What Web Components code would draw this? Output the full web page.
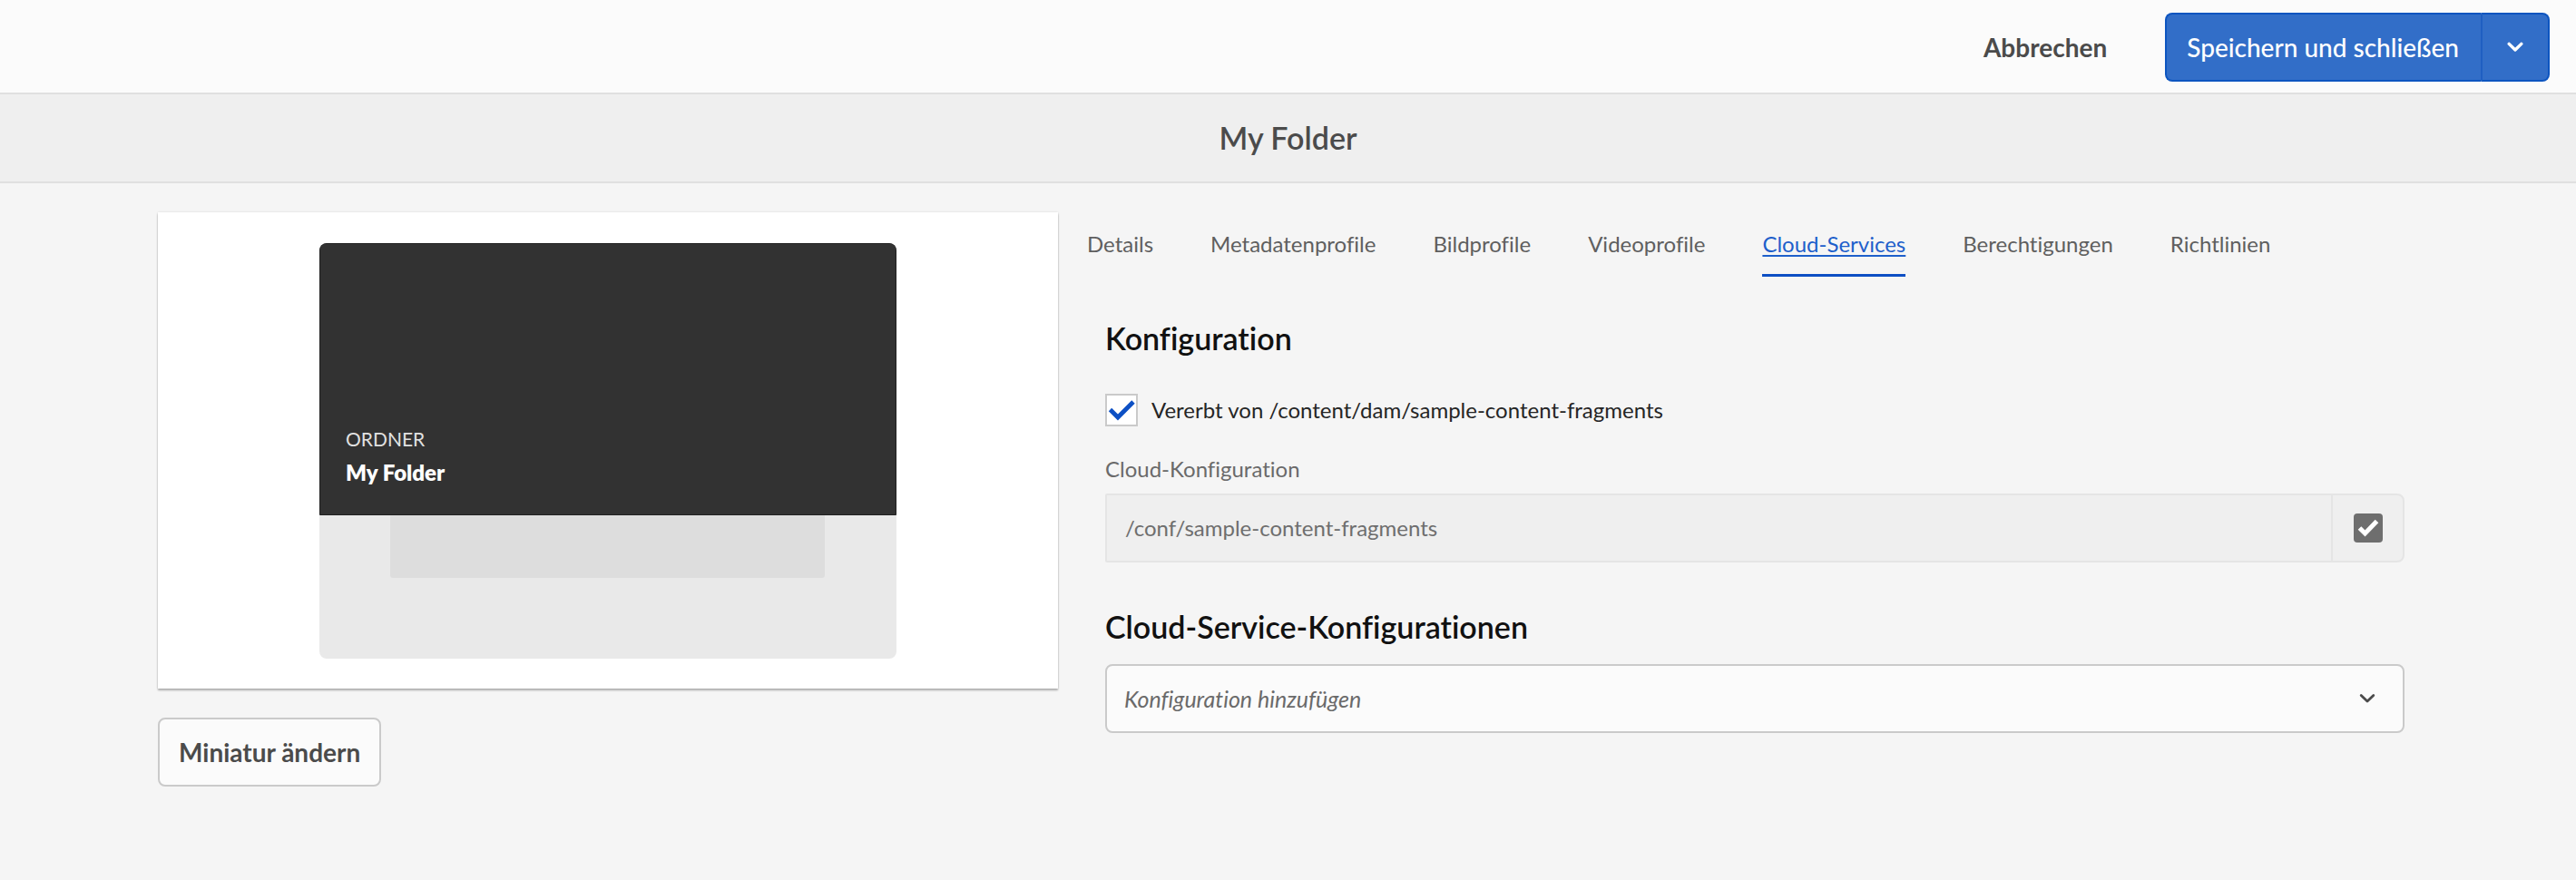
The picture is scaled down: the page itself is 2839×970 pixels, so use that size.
<!DOCTYPE html>
<html lang="de">
<head>
<meta charset="utf-8">
<meta name="viewport" content="width=device-width, initial-scale=1">
<title>My Folder</title>
<style>
  body {
    margin: 0;
    background: #f5f5f5;
    color: #4b4b4b;
    font: 400 24px/32px Lato, "Open Sans", sans-serif;
    font-feature-settings: "liga" 0;
  }
</style>
</head>
<body>
<folder-properties></folder-properties>
<script>
const define = (name, html, setup) => {
  const template = document.createElement('template');
  template.innerHTML = html;
  customElements.define(name, class extends HTMLElement {
    constructor() {
      super();
      this.attachShadow({ mode: 'open' }).append(template.content.cloneNode(true));
    }
    connectedCallback() {
      if (setup) setup(this, this.shadowRoot);
    }
  });
};

define('action-bar', `
  <style>
    :host { display: flex; justify-content: flex-end; align-items: center; gap: 40px;
      padding: 14px 29px 12px; background: #fbfbfb; border-bottom: 2px solid #e0e0e0; }
  </style>
  <slot></slot>`);

define('quiet-button', `
  <style>
    :host { display: block; }
    button { font: 700 28px/40px Lato, sans-serif; color: #4b4b4b; background: none;
      border: 0; padding: 0 24px; height: 76px; }
  </style>
  <button type="button"><slot></slot></button>`);

define('outline-button', `
  <style>
    :host { display: block; }
    button { font: 700 28px/40px Lato, sans-serif; color: #4b4b4b; background: #fbfbfb;
      border: 2px solid #cacaca; border-radius: 8px; padding: 0 21px; height: 76px; }
  </style>
  <button type="button"><slot></slot></button>`);

define('split-button', `
  <style>
    :host { display: flex; height: 76px; }
    button { font: 500 28px/40px Lato, sans-serif; color: #fff; background: #326ec8;
      border: 2px solid #0d55c0; margin: 0; }
    .main { border-radius: 8px 0 0 8px; border-right-width: 0; padding: 0 24px 0 22px; }
    .more { border-radius: 0 8px 8px 0; border-left: 2px solid #1f5fc2; width: 76px; padding: 0;
      display: grid; place-items: center; }
  </style>
  <button class="main" type="button"><slot></slot></button>
  <button class="more" type="button" aria-label="Weitere Optionen">
    <svg width="18" height="12" viewBox="0 0 18 12" fill="none" stroke="#fff" stroke-width="3.4" stroke-linecap="round" stroke-linejoin="round"><path d="M2.2 2.4 9 9l6.800-6.600"/></svg>
  </button>`);

define('title-bar', `
  <style>
    :host { display: block; padding: 28px 0; text-align: center; background: #efefef;
      border-bottom: 2px solid #e0e0e0; }
    h1 { margin: 0; font: 600 34px/40px Lato, sans-serif; color: #4b4b4b; }
  </style>
  <h1><slot></slot></h1>`);

define('folder-thumbnail', `
  <style>
    :host { display: block; padding: 34px 178px 33px; background: #fff;
      box-shadow: 0 2px 2px rgba(0,0,0,.28), 0 0 2px rgba(0,0,0,.12); }
    .card { display: grid; grid-template-rows: 300fr 159fr; aspect-ratio: 637 / 459;
      background: #e9e9e9; border-radius: 8px; overflow: hidden; }
    .cover { display: flex; flex-direction: column;
      justify-content: flex-end; gap: 5px; padding: 0 28px 30px; background: #323232;
      border: 1px solid #202020; border-radius: 6px 6px 0 0; }
    .kind { font-size: 21px; color: #e1e1e1; text-transform: uppercase; }
    .name { font-weight: 800; color: #fff; }
    .base { display: grid; grid-template: 70fr 89fr / 78fr 480fr 79fr; }
    .base i { grid-area: 1 / 2; background: #ddd; border-radius: 0 0 3px 3px; }
  </style>
  <div class="card">
    <div class="cover">
      <div class="kind"><slot name="kind"></slot></div>
      <div class="name"><slot name="name"></slot></div>
    </div>
    <div class="base"><i></i></div>
  </div>`);

define('tab-list', `
  <style>
    :host { display: block; }
    nav { display: flex; flex-wrap: wrap; gap: 0 63px; }
  </style>
  <nav><slot></slot></nav>`);

define('tab-link', `
  <style>
    :host { display: block; }
    a { display: block; padding-bottom: 17px; border-bottom: 3px solid transparent;
      color: #5f5f5f; text-decoration: none; }
    :host([selected]) a { color: #1e5fcb; border-color: #0d4fc4;
      text-decoration: underline; text-decoration-thickness: 2px; text-underline-offset: 3px;
      text-decoration-skip-ink: none; }
  </style>
  <a href="#"><slot></slot></a>`,
  (host, root) => {
    if (host.hasAttribute('selected')) root.querySelector('a').setAttribute('aria-current', 'page');
  });

define('section-heading', `
  <style>
    :host { display: block; }
    h2 { margin: 0; font: 600 34px/40px Lato, sans-serif; color: #111;
      font-feature-settings: "liga" 0; }
  </style>
  <h2><slot></slot></h2>`);

define('check-field', `
  <style>
    :host { display: block; }
    label { display: flex; align-items: center; gap: 15px; color: #252525; }
    .box { display: grid; }
    input, svg { grid-area: 1 / 1; width: 36px; height: 36px; }
    input { appearance: none; box-sizing: border-box; margin: 0; background: #fff;
      border: 2px solid #cacaca; }
    svg { pointer-events: none; visibility: hidden; }
    input:checked + svg { visibility: visible; }
  </style>
  <label>
    <span class="box">
      <input type="checkbox" checked>
      <svg viewBox="0 0 36 36" fill="none" stroke="#0d50c4" stroke-width="4.800"><path d="M5.500 17.500 14 26 31 9"/></svg>
    </span>
    <span><slot></slot></span>
  </label>`);

define('path-field', `
  <style>
    :host { display: block; }
    label { display: block; margin-bottom: 11px; color: #6a6a6a; }
    .row { display: flex; height: 76px; box-sizing: border-box; background: #efefef;
      border: 2px solid #e5e5e5; border-radius: 2px 8px 8px 2px; }
    input { flex: 1; min-width: 0; font: inherit; color: #6e6e6e; background: none; border: 0;
      margin: 0; padding: 0 20px; }
    button { width: 79px; padding: 0; background: none; border: 0; border-left: 2px solid #e5e5e5;
      display: grid; place-items: center; }
  </style>
  <label for="path"></label>
  <div class="row">
    <input id="path" type="text" disabled>
    <button type="button" disabled aria-label="Auswahl öffnen">
      <svg width="34" height="34" viewBox="0 0 34 34"><rect x="1" y="1" width="32" height="32" rx="4" fill="#6e6e6e"/><path d="M7.500 17 13.500 23 26.500 9.500" fill="none" stroke="#fff" stroke-width="5"/></svg>
    </button>
  </div>`,
  (host, root) => {
    root.querySelector('label').textContent = host.getAttribute('label');
    root.querySelector('input').value = host.getAttribute('value');
  });

define('config-select', `
  <style>
    :host { display: grid; align-items: center; }
    select, svg { grid-area: 1 / 1; }
    select { appearance: none; box-sizing: border-box; width: 100%; height: 76px; margin: 0;
      padding: 0 19px; font: italic 400 25px/32px Lato, sans-serif; color: #6a6a6a;
      font-feature-settings: "liga" 0;
      background: #fbfbfb; border: 2px solid #cacaca; border-radius: 8px; }
    svg { justify-self: end; margin-right: 32px; pointer-events: none; }
  </style>
  <select><option></option></select>
  <svg width="18" height="12" viewBox="0 0 18 12" fill="none" stroke="#4b4b4b" stroke-width="2.800" stroke-linecap="round" stroke-linejoin="round"><path d="M2.200 2.400 9 9l6.800-6.600"/></svg>`,
  (host, root) => {
    root.querySelector('option').textContent = host.getAttribute('placeholder');
    root.querySelector('select').setAttribute('aria-label', host.getAttribute('label'));
  });

define('folder-properties', `
  <style>
    :host { display: block; }
    main { display: grid; grid-template-columns: 992fr 1452fr; gap: 32px; align-items: start;
      padding: 32px 189px 64px 174px; }
    aside { display: grid; gap: 32px; justify-items: start; }
    folder-thumbnail { justify-self: stretch; }
    .settings { padding-top: 19px; }
    form { padding: 48px 0 0 20px; }
    check-field { margin: 41px 0 31px; }
    path-field { margin-bottom: 51px; }
    config-select { margin-top: 21px; }
  </style>
  <action-bar>
    <quiet-button>Abbrechen</quiet-button>
    <split-button>Speichern und schließen</split-button>
  </action-bar>
  <title-bar>My Folder</title-bar>
  <main>
    <aside>
      <folder-thumbnail><span slot="kind">ORDNER</span><span slot="name">My Folder</span></folder-thumbnail>
      <outline-button>Miniatur ändern</outline-button>
    </aside>
    <div class="settings">
      <tab-list>
        <tab-link>Details</tab-link>
        <tab-link>Metadatenprofile</tab-link>
        <tab-link>Bildprofile</tab-link>
        <tab-link>Videoprofile</tab-link>
        <tab-link selected>Cloud-Services</tab-link>
        <tab-link>Berechtigungen</tab-link>
        <tab-link>Richtlinien</tab-link>
      </tab-list>
      <form>
        <section-heading>Konfiguration</section-heading>
        <check-field>Vererbt von /content/dam/sample-content-fragments</check-field>
        <path-field label="Cloud-Konfiguration" value="/conf/sample-content-fragments"></path-field>
        <section-heading>Cloud-Service-Konfigurationen</section-heading>
        <config-select label="Cloud-Service-Konfigurationen" placeholder="Konfiguration hinzufügen"></config-select>
      </form>
    </div>
  </main>`);
</script>
</body>
</html>
